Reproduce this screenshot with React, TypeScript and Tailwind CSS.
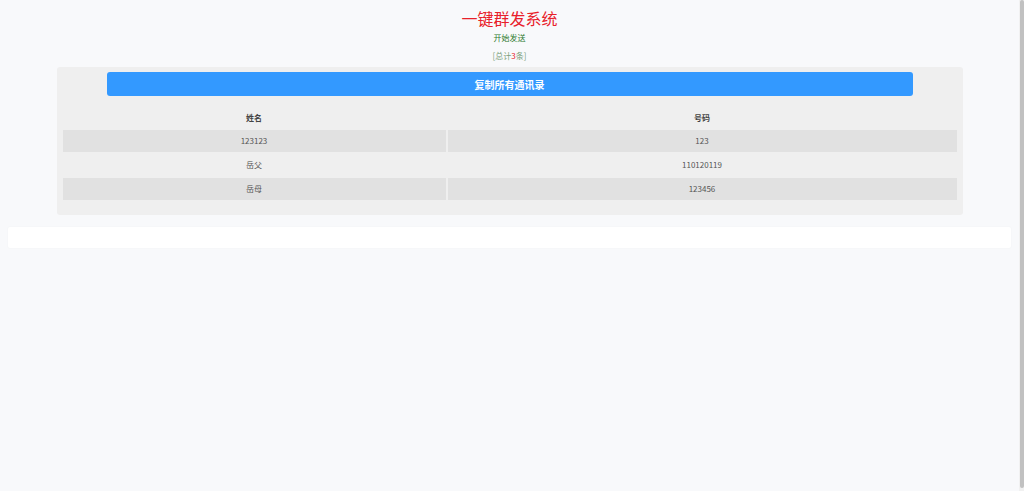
export default function App() {
  const rows = [
    ["123123", "123"],
    ["岳父", "110120119"],
    ["岳母", "123456"],
  ];
  return (
    <div className="flex h-[491px] w-[1024px] overflow-hidden bg-[#f8f9fb]" style={{ fontFamily: '"Noto Sans CJK SC", "Noto Sans", sans-serif' }}>
      <div className="flex w-[1019px] flex-col">
        <div className="flex flex-col items-center pt-[7px]">
          <div className="text-[16px] leading-[22px] text-[#e8202a]">一键群发系统</div>
          <div className="mt-[4px] text-[8px] leading-[10px] text-[#2c7a2c]">开始发送</div>
          <div className="mt-[8px] text-[8px] leading-[10px] text-[#7aa07a]">[总计<span className="text-[#e8202a]">3</span>条]</div>
        </div>
        <div className="mx-auto mt-[6px] w-[906px] rounded-[3px] bg-[#efefef] px-[6px] pb-[14px] pt-[5px]">
          <div className="mx-auto flex h-[24px] w-[806px] items-center justify-center rounded-[3px] bg-[#3399ff] text-[10px] font-bold text-white">复制所有通讯录</div>
          <div className="mt-[11px] grid grid-cols-[383px_1fr] gap-x-[2px] text-[8px] text-[#555]">
            <div className="flex h-[22px] items-center justify-center font-bold text-[#444]">姓名</div>
            <div className="flex h-[22px] items-center justify-center font-bold text-[#444]">号码</div>
            {rows.map((r, i) => (
              <>
                <div key={"a" + i} className={`my-[1px] flex h-[22px] items-center justify-center ${i % 2 === 0 ? "bg-[#e1e1e1]" : ""}`}>{r[0]}</div>
                <div key={"b" + i} className={`my-[1px] flex h-[22px] items-center justify-center ${i % 2 === 0 ? "bg-[#e1e1e1]" : ""}`}>{r[1]}</div>
              </>
            ))}
          </div>
        </div>
        <div className="mx-[8px] mt-[12px] h-[21px] rounded-[2px] bg-white shadow-[0_0_2px_rgba(0,0,0,0.04)]"></div>
      </div>
      <div className="ml-auto flex w-[5px] flex-col bg-[#f1f1f1]">
        <div className="mx-auto h-[488px] w-[4px] rounded-[2px] bg-[#c1c1c1]"></div>
      </div>
    </div>
  );
}
